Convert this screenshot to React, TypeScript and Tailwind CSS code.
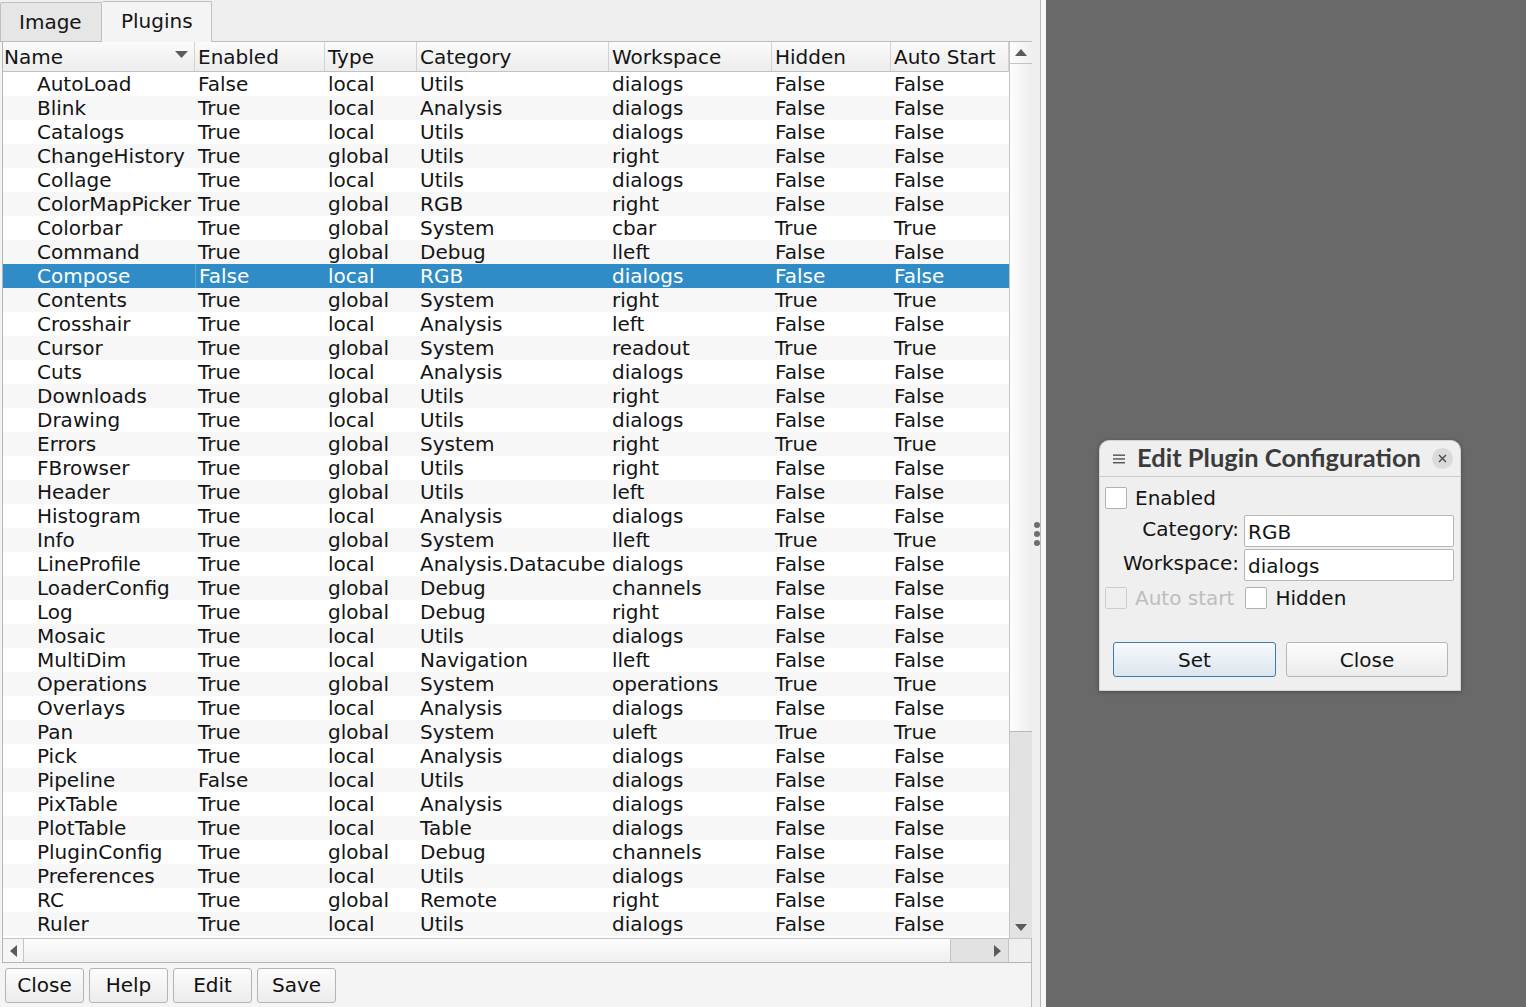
import React from "react";

const rows: string[][] = [
  ["AutoLoad", "False", "local", "Utils", "dialogs", "False", "False"],
  ["Blink", "True", "local", "Analysis", "dialogs", "False", "False"],
  ["Catalogs", "True", "local", "Utils", "dialogs", "False", "False"],
  ["ChangeHistory", "True", "global", "Utils", "right", "False", "False"],
  ["Collage", "True", "local", "Utils", "dialogs", "False", "False"],
  ["ColorMapPicker", "True", "global", "RGB", "right", "False", "False"],
  ["Colorbar", "True", "global", "System", "cbar", "True", "True"],
  ["Command", "True", "global", "Debug", "lleft", "False", "False"],
  ["Compose", "False", "local", "RGB", "dialogs", "False", "False"],
  ["Contents", "True", "global", "System", "right", "True", "True"],
  ["Crosshair", "True", "local", "Analysis", "left", "False", "False"],
  ["Cursor", "True", "global", "System", "readout", "True", "True"],
  ["Cuts", "True", "local", "Analysis", "dialogs", "False", "False"],
  ["Downloads", "True", "global", "Utils", "right", "False", "False"],
  ["Drawing", "True", "local", "Utils", "dialogs", "False", "False"],
  ["Errors", "True", "global", "System", "right", "True", "True"],
  ["FBrowser", "True", "global", "Utils", "right", "False", "False"],
  ["Header", "True", "global", "Utils", "left", "False", "False"],
  ["Histogram", "True", "local", "Analysis", "dialogs", "False", "False"],
  ["Info", "True", "global", "System", "lleft", "True", "True"],
  ["LineProfile", "True", "local", "Analysis.Datacube", "dialogs", "False", "False"],
  ["LoaderConfig", "True", "global", "Debug", "channels", "False", "False"],
  ["Log", "True", "global", "Debug", "right", "False", "False"],
  ["Mosaic", "True", "local", "Utils", "dialogs", "False", "False"],
  ["MultiDim", "True", "local", "Navigation", "lleft", "False", "False"],
  ["Operations", "True", "global", "System", "operations", "True", "True"],
  ["Overlays", "True", "local", "Analysis", "dialogs", "False", "False"],
  ["Pan", "True", "global", "System", "uleft", "True", "True"],
  ["Pick", "True", "local", "Analysis", "dialogs", "False", "False"],
  ["Pipeline", "False", "local", "Utils", "dialogs", "False", "False"],
  ["PixTable", "True", "local", "Analysis", "dialogs", "False", "False"],
  ["PlotTable", "True", "local", "Table", "dialogs", "False", "False"],
  ["PluginConfig", "True", "global", "Debug", "channels", "False", "False"],
  ["Preferences", "True", "local", "Utils", "dialogs", "False", "False"],
  ["RC", "True", "global", "Remote", "right", "False", "False"],
  ["Ruler", "True", "local", "Utils", "dialogs", "False", "False"],
];

const colW = ["w-[192px]", "w-[130px]", "w-[92px]", "w-[192px]", "w-[163px]", "w-[119px]", "w-[118px]"];
const headers = ["Name", "Enabled", "Type", "Category", "Workspace", "Hidden", "Auto Start"];

const Tri = ({ dir }: { dir: "up" | "down" | "left" | "right" }) => {
  const pts =
    dir === "up"
      ? "0,8 6,1 12,8"
      : dir === "down"
      ? "0,1 6,8 12,1"
      : dir === "left"
      ? "8,0 1,6 8,12"
      : "1,0 8,6 1,12";
  const w = dir === "up" || dir === "down" ? 12 : 9;
  const h = dir === "up" || dir === "down" ? 9 : 12;
  return (
    <svg width={w} height={h} viewBox={`0 0 ${w} ${h}`}>
      <polygon points={pts} fill="#5a5a5a" />
    </svg>
  );
};

const BtnBottom = ({ label }: { label: string }) => (
  <div className="w-[79px] h-[35px] flex items-center justify-center border border-[#b4b4b4] rounded-[3px] bg-gradient-to-b from-[#fcfcfc] to-[#ececec] text-[20px] text-[#111] pb-[1px]">
    {label}
  </div>
);

export default function App() {
  return (
    <div
      className="w-[1526px] h-[1007px] flex overflow-hidden bg-[#efefef] text-[#141414]"
      style={{ fontFamily: '"DejaVu Sans", sans-serif' }}
    >
      {/* Left panel */}
      <div className="w-[1032px] h-full flex flex-col shrink-0">
        {/* tab bar */}
        <div className="h-[41px] flex items-end shrink-0 relative">
          <div className="w-[102px] h-[39px] border border-b-0 border-[#c0c0c0] bg-[#e6e6e6] flex items-center pl-[18px] text-[20px] rounded-t-[2px]">
            Image
          </div>
          <div className="w-[110px] h-[41px] border border-b-0 border-l-0 border-[#c0c0c0] bg-[#f4f4f4] flex items-center pl-[19px] pb-[2px] text-[20px] rounded-t-[2px] relative z-10 -mb-px">
            Plugins
          </div>
        </div>
        {/* pane */}
        <div className="flex-1 flex flex-col border-t border-r border-[#bcbcbc] bg-[#f4f4f4]">
          {/* table frame */}
          <div className="h-[921px] ml-[2px] flex flex-col border-l border-b border-[#b4b4b4] bg-white shrink-0">
            <div className="flex flex-1 min-h-0">
              {/* table */}
              <div className="w-[1006px] flex flex-col">
                {/* header */}
                <div className="h-[30px] flex bg-gradient-to-b from-[#fbfbfb] to-[#ececec] border-b border-[#c2c2c2] shrink-0">
                  {headers.map((h, i) => (
                    <div
                      key={h}
                      className={`${colW[i]} h-full flex items-center ${i === 0 ? "pl-[1px]" : "pl-[3px]"} text-[20px] border-r border-[#d2d2d2] relative shrink-0`}
                    >
                      {h}
                      {i === 0 && (
                        <span className="absolute right-[6px] top-[9px]">
                          <svg width="13" height="8" viewBox="0 0 13 8">
                            <polygon points="0,0 13,0 6.5,7" fill="#5c5c5c" />
                          </svg>
                        </span>
                      )}
                    </div>
                  ))}
                </div>
                {/* rows */}
                <div className="flex flex-col">
                  {rows.map((r, ri) => {
                    const sel = r[0] === "Compose";
                    const bg = sel ? "bg-[#308cc6] text-white" : ri % 2 === 1 ? "bg-[#f7f7f7]" : "bg-white";
                    return (
                      <div key={r[0]} className={`h-[24px] flex ${bg}`}>
                        {r.map((c, ci) => (
                          <div
                            key={ci}
                            className={`${colW[ci]} h-full shrink-0 flex items-center text-[20px] leading-[24px] whitespace-nowrap ${
                              ci === 0 ? "pl-[34px]" : "pl-[3px]"
                            } ${sel && ci === 1 ? "border-l border-[#5aa6d6]" : ""}`}
                          >
                            {c}
                          </div>
                        ))}
                      </div>
                    );
                  })}
                </div>
              </div>
              {/* vertical scrollbar */}
              <div className="w-[23px] flex flex-col border-l border-[#c4c4c4] bg-[#e2e2e2] shrink-0">
                <div className="h-[22px] flex items-center justify-center bg-gradient-to-r from-[#fdfdfd] to-[#efefef] border-b border-[#c4c4c4]">
                  <Tri dir="up" />
                </div>
                <div className="h-[668px] bg-gradient-to-r from-[#fdfdfd] to-[#eeeeee] border-b border-[#b8b8b8]" />
                <div className="flex-1" />
                <div className="h-[22px] flex items-center justify-center">
                  <Tri dir="down" />
                </div>
              </div>
            </div>
            {/* horizontal scrollbar */}
            <div className="h-[24px] flex border-t border-[#c4c4c4] shrink-0">
              <div className="w-[21px] flex items-center justify-center bg-[#f6f6f6] border-r border-[#c4c4c4]">
                <Tri dir="left" />
              </div>
              <div className="w-[927px] bg-gradient-to-b from-[#fdfdfd] to-[#efefef] border-r border-[#c4c4c4]" />
              <div className="w-[36px] bg-[#e2e2e2]" />
              <div className="w-[22px] flex items-center justify-center bg-[#e2e2e2] border-r border-[#c4c4c4]">
                <Tri dir="right" />
              </div>
              <div className="flex-1 bg-[#efefef]" />
            </div>
          </div>
          {/* buttons */}
          <div className="flex gap-[5px] pl-[5px] pt-[5px] border-b border-[#bcbcbc] h-[45px]">
            <BtnBottom label="Close" />
            <BtnBottom label="Help" />
            <BtnBottom label="Edit" />
            <BtnBottom label="Save" />
          </div>
        </div>
      </div>
      {/* splitter */}
      <div className="w-[9px] h-full bg-[#efefef] border-r border-[#b8b8b8] flex flex-col items-center justify-center gap-[3px] shrink-0 pl-[1px] pt-[60px]">
        <div className="w-[6px] h-[6px] rounded-full bg-[#6e6e6e]" />
        <div className="w-[6px] h-[6px] rounded-full bg-[#6e6e6e]" />
        <div className="w-[6px] h-[6px] rounded-full bg-[#6e6e6e]" />
      </div>
      <div className="w-[5px] h-full bg-[#f7f7f7] shrink-0" />
      {/* right dark area */}
      <div className="flex-1 h-full bg-[#696969] pt-[440px] pl-[53px]">
        <div className="w-[362px] h-[251px] rounded-t-[10px] bg-[#efefef] border border-[#d4d4d4] shadow-[0_1px_4px_rgba(0,0,0,0.3)] flex flex-col">
          {/* title */}
          <div className="h-[36px] flex items-center border-b border-[#cbcbcb] shrink-0">
            <div className="w-[37px] flex items-center justify-center pl-[1px]">
              <svg width="12" height="10" viewBox="0 0 12 10">
                <rect x="0" y="0.5" width="12" height="1.3" fill="#444" />
                <rect x="0" y="4.3" width="12" height="1.3" fill="#444" />
                <rect x="0" y="8.1" width="12" height="1.3" fill="#444" />
              </svg>
            </div>
            <div
              className="text-[25.5px] font-bold text-[#3b3b3b] leading-none pb-[2px] whitespace-nowrap"
              style={{ fontFamily: 'Lato, "Open Sans", sans-serif' }}
            >
              Edit Plugin Configuration
            </div>
            <div className="ml-auto mr-[7px] w-[21px] h-[21px] rounded-full bg-[#dadada] flex items-center justify-center shrink-0">
              <svg width="9" height="9" viewBox="0 0 9 9">
                <path d="M1 1 L8 8 M8 1 L1 8" stroke="#444" strokeWidth="1.3" />
              </svg>
            </div>
          </div>
          {/* body */}
          <div className="flex flex-col pl-[5px] pr-[6px] text-[20px]">
            <div className="flex items-center mt-[10px] h-[22px]">
              <div className="w-[22px] h-[22px] bg-white border border-[#b2b2b2] rounded-[2px]" />
              <span className="ml-[8px]">Enabled</span>
            </div>
            <div className="flex items-center mt-[6px] h-[32px]">
              <div className="w-[135px] text-right pr-[1px] pb-[5px]">Category:</div>
              <div className="ml-[4px] w-[210px] h-[32px] bg-white border border-[#b6b6b6] rounded-[2px] flex items-center pl-[3px] pt-[1px]">
                RGB
              </div>
            </div>
            <div className="flex items-center mt-[2px] h-[32px]">
              <div className="w-[135px] text-right pr-[1px] pb-[5px]">Workspace:</div>
              <div className="ml-[4px] w-[210px] h-[32px] bg-white border border-[#b6b6b6] rounded-[2px] flex items-center pl-[3px] pt-[1px]">
                dialogs
              </div>
            </div>
            <div className="flex items-center mt-[6px] h-[22px]">
              <div className="w-[22px] h-[22px] bg-[#efefef] border border-[#cdcdcd] rounded-[2px]" />
              <span className="ml-[8px] text-[#bdbdbd]">Auto start</span>
              <div className="ml-[11px] w-[22px] h-[22px] bg-white border border-[#b2b2b2] rounded-[2px]" />
              <span className="ml-[8px]">Hidden</span>
            </div>
            <div className="flex mt-[33px] pl-[8px] gap-[10px]">
              <div className="w-[163px] h-[35px] border border-[#3c7bae] rounded-[3px] bg-gradient-to-b from-[#f6f9fc] to-[#dce5ee] flex items-center justify-center">
                Set
              </div>
              <div className="w-[162px] h-[35px] border border-[#b6b6b6] rounded-[3px] bg-gradient-to-b from-[#fcfcfc] to-[#ececec] flex items-center justify-center">
                Close
              </div>
            </div>
          </div>
        </div>
      </div>
    </div>
  );
}
